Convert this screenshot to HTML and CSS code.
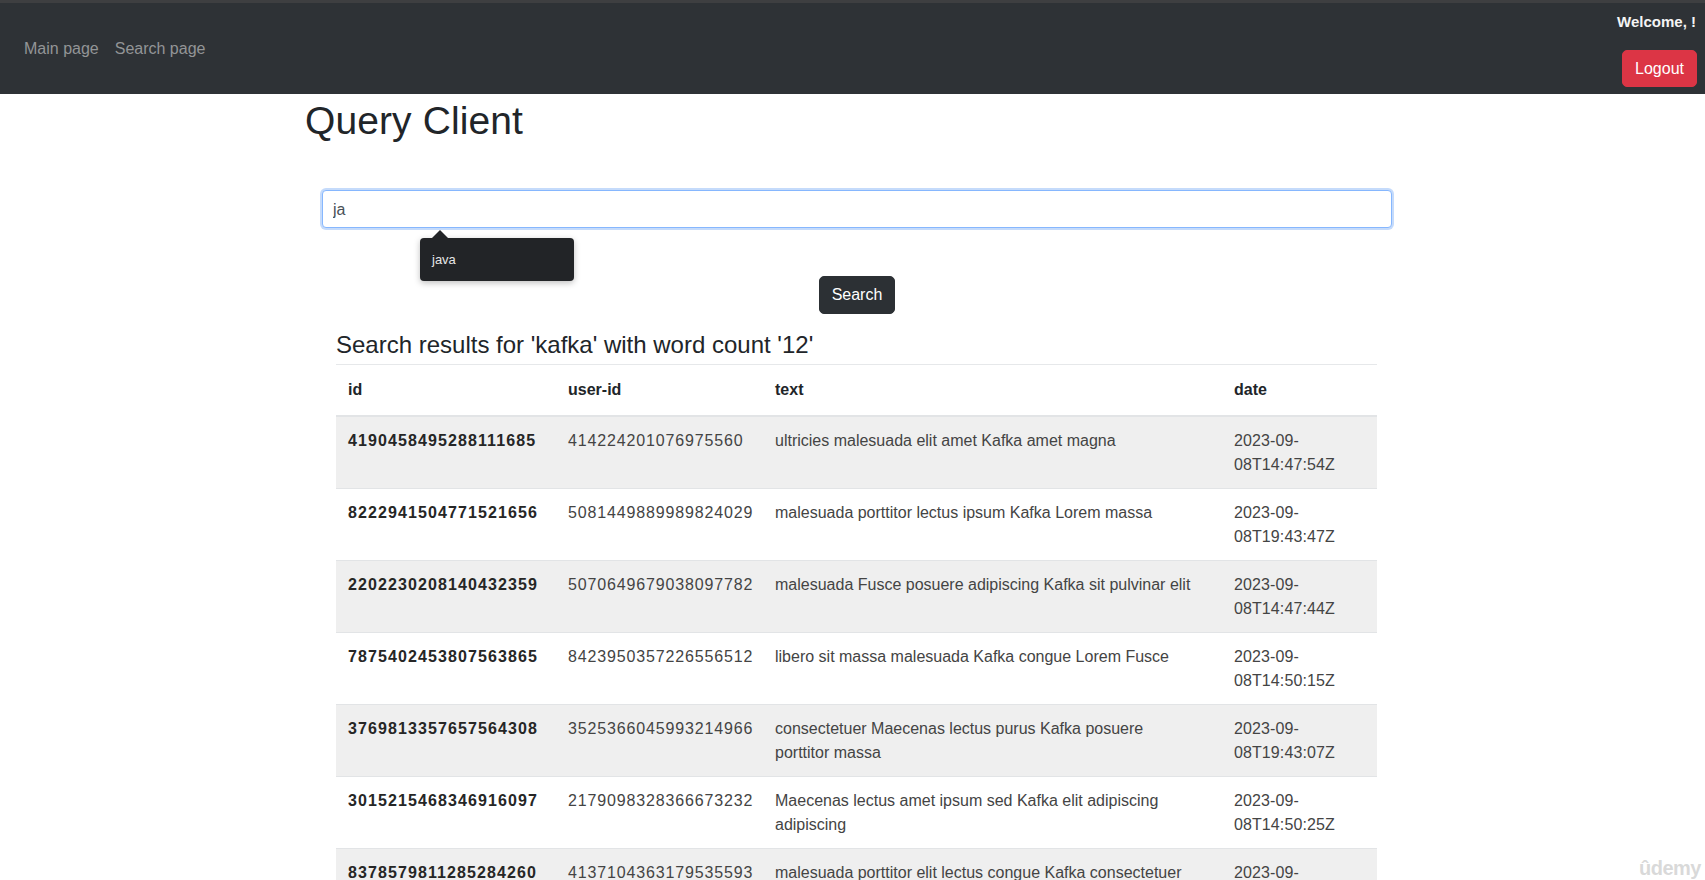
FILE: index.html
```html
<!DOCTYPE html>
<html lang="en">
<head>
<meta charset="utf-8">
<title>Query Client</title>
<link rel="stylesheet" href="styles.css">
</head>
<body>
<nav class="navbar">
  <div class="nav-links">
    <a class="nav-link" href="#">Main page</a>
    <a class="nav-link" href="#">Search page</a>
  </div>
  <div class="nav-user">
    <span class="welcome">Welcome, !</span>
    <button class="btn btn-danger">Logout</button>
  </div>
</nav>
<main class="container">
  <h1 class="title">Query Client</h1>
  <form class="search-form">
    <input class="form-control" type="text" value="ja">
    <div class="suggest">java</div>
    <div class="form-actions">
      <button type="button" class="btn btn-dark">Search</button>
    </div>
  </form>
  <section class="results">
    <h3 class="results-title">Search results for 'kafka' with word count '12'</h3>
    <table class="table">
      <colgroup>
        <col class="c-id"><col class="c-user"><col class="c-text"><col class="c-date">
      </colgroup>
      <thead>
        <tr><th>id</th><th>user-id</th><th>text</th><th>date</th></tr>
      </thead>
      <tbody>
        <tr><td class="id">4190458495288111685</td><td class="num">414224201076975560</td><td class="txt">ultricies malesuada elit amet Kafka amet magna</td><td class="date">2023-09-<wbr>08T14:47:54Z</td></tr>
        <tr><td class="id">8222941504771521656</td><td class="num">5081449889989824029</td><td class="txt">malesuada porttitor lectus ipsum Kafka Lorem massa</td><td class="date">2023-09-<wbr>08T19:43:47Z</td></tr>
        <tr><td class="id">2202230208140432359</td><td class="num">5070649679038097782</td><td class="txt">malesuada Fusce posuere adipiscing Kafka sit pulvinar elit</td><td class="date">2023-09-<wbr>08T14:47:44Z</td></tr>
        <tr><td class="id">7875402453807563865</td><td class="num">8423950357226556512</td><td class="txt">libero sit massa malesuada Kafka congue Lorem Fusce</td><td class="date">2023-09-<wbr>08T14:50:15Z</td></tr>
        <tr><td class="id">3769813357657564308</td><td class="num">3525366045993214966</td><td class="txt">consectetuer Maecenas lectus purus Kafka posuere porttitor massa</td><td class="date">2023-09-<wbr>08T19:43:07Z</td></tr>
        <tr><td class="id">3015215468346916097</td><td class="num">2179098328366673232</td><td class="txt">Maecenas lectus amet ipsum sed Kafka elit adipiscing adipiscing</td><td class="date">2023-09-<wbr>08T14:50:25Z</td></tr>
        <tr><td class="id">8378579811285284260</td><td class="num">4137104363179535593</td><td class="txt">malesuada porttitor elit lectus congue Kafka consectetuer ipsum</td><td class="date">2023-09-<wbr>08T14:47:51Z</td></tr>
      </tbody>
    </table>
  </section>
</main>
<div class="watermark">ûdemy</div>
</body>
</html>
```
FILE: styles.css
```css
* { box-sizing: border-box; }
html, body { margin: 0; padding: 0; }
body {
  font-family: "Liberation Sans", Arial, Helvetica, sans-serif;
  font-size: 16px;
  line-height: 1.5;
  color: #212529;
  background: #fff;
  height: 880px;
  overflow: hidden;
}

.navbar {
  height: 94px;
  background: #2e3236;
  border-top: 3px solid #3e3f41;
  display: flex;
  justify-content: space-between;
  align-items: flex-start;
  padding: 0 8px 0 16px;
}
.nav-links {
  display: flex;
  margin-top: 34px;
}
.nav-link {
  color: #939597;
  text-decoration: none;
  padding: 0 8px;
  line-height: 24px;
}
.nav-user {
  display: flex;
  flex-direction: column;
  align-items: flex-end;
}
.welcome {
  color: #f4f4f4;
  font-weight: bold;
  font-size: 15px;
  line-height: 20px;
  margin-top: 9px;
  margin-right: 1px;
}
.btn {
  font-family: inherit;
  font-size: 16px;
  line-height: 24px;
  padding: 6px 12px;
  border: 1px solid transparent;
  border-radius: 5px;
  color: #fff;
  cursor: pointer;
}
.btn-danger {
  background: #dc3545;
  border-color: #dc3545;
  margin-top: 18px;
  height: 37px;
  padding: 5px 12px;
}
.btn-dark {
  background: #2c3034;
  border-color: #2c3034;
  height: 38px;
  width: 76px;
  padding: 6px 0;
}

.container {
  width: 1104px;
  margin-left: 305px;
}
.title {
  font-size: 39px;
  font-weight: normal;
  line-height: 48px;
  margin: 3px 0 0;
  color: #212529;
  letter-spacing: 0.1px;
}

.search-form {
  position: relative;
  margin-top: 45px;
  padding: 0 17px;
}
.form-control {
  display: block;
  width: 100%;
  height: 38px;
  padding: 7px 10px 5px;
  font-family: inherit;
  font-size: 16px;
  color: #495057;
  background: #fff;
  border: 1px solid #86b7fe;
  border-radius: 4px;
  box-shadow: 0 0 0 2px #c5dbfb;
  outline: none;
}
.suggest {
  position: absolute;
  left: 115px;
  top: 48px;
  width: 154px;
  height: 43px;
  background: #222427;
  color: #e6e6e6;
  font-size: 13px;
  line-height: 43px;
  padding-left: 12px;
  border-radius: 4px;
  box-shadow: 0 2px 6px rgba(0,0,0,.25);
}
.suggest::before {
  content: "";
  position: absolute;
  left: 12px;
  top: -8px;
  border-style: solid;
  border-width: 0 8px 8px 8px;
  border-color: transparent transparent #222427 transparent;
}
.form-actions {
  display: flex;
  justify-content: center;
  margin-top: 48px;
}

.results {
  padding: 0 32px 0 31px;
  margin-top: 16px;
}
.results-title {
  font-size: 24px;
  font-weight: normal;
  line-height: 29px;
  margin: 0 0 5px;
  color: #212529;
}
.table {
  width: 100%;
  border-collapse: collapse;
  table-layout: fixed;
}
.c-id { width: 220px; }
.c-user { width: 207px; }
.c-text { width: 459px; }
.c-date { width: 155px; }
.table th {
  text-align: left;
  font-weight: bold;
  color: #212529;
  padding: 13px 12px;
  border-top: 1px solid #e6e8ea;
  border-bottom: 2px solid #e2e4e6;
  line-height: 24px;
}
.table td {
  padding: 12px 12px 11px;
  border-top: 1px solid #e2e4e6;
  vertical-align: top;
  line-height: 24px;
  color: #444;
}
.table tbody tr:nth-child(odd) { background: #efefef; }
.table tbody tr:first-child td { border-top: 0; }
.table td.id {
  font-weight: bold;
  color: #262626;
  letter-spacing: 1.1px;
}
.table td.num { letter-spacing: 0.85px; }
.table td.txt { padding-right: 22px; }
.table td.date { letter-spacing: 0.1px; }

.watermark {
  position: absolute;
  right: 4px;
  bottom: -3px;
  font-size: 20px;
  font-weight: bold;
  color: rgba(200,200,200,.7);
  letter-spacing: -0.5px;
}
```
